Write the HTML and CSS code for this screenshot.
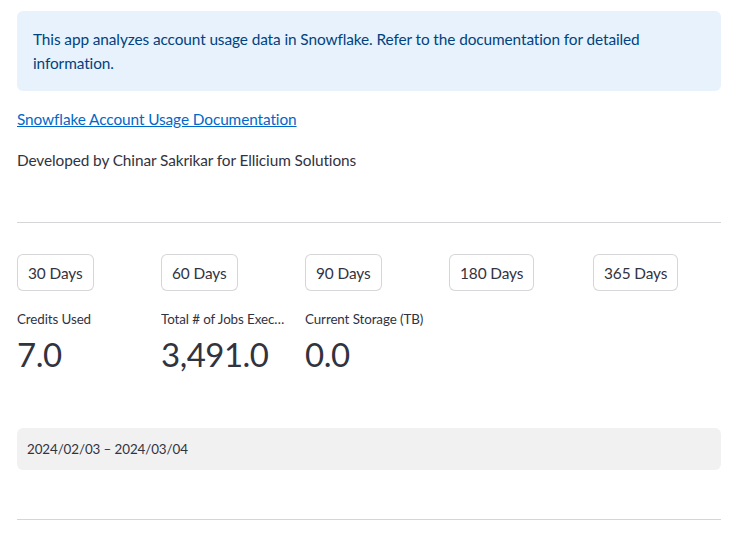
FILE: index.html
```html
<!DOCTYPE html>
<html>
<head>
<meta charset="utf-8">
<link rel="stylesheet" href="styles.css">
</head>
<body>
<main class="main">
  <div class="info">This app analyzes account usage data in Snowflake. Refer to the documentation for detailed information.</div>
  <p class="text link-row"><a class="link" href="#">Snowflake Account Usage Documentation</a></p>
  <p class="text dev">Developed by Chinar Sakrikar for Ellicium Solutions</p>
  <hr class="rule rule-top">
  <div class="cols buttons">
    <div class="col"><button class="btn">30 Days</button></div>
    <div class="col"><button class="btn">60 Days</button></div>
    <div class="col"><button class="btn">90 Days</button></div>
    <div class="col"><button class="btn">180 Days</button></div>
    <div class="col"><button class="btn">365 Days</button></div>
  </div>
  <div class="cols metrics">
    <div class="metric"><div class="m-label">Credits Used</div><div class="m-value">7.0</div></div>
    <div class="metric"><div class="m-label">Total # of Jobs Executed</div><div class="m-value">3,491.0</div></div>
    <div class="metric"><div class="m-label">Current Storage (TB)</div><div class="m-value">0.0</div></div>
    <div class="metric"></div>
    <div class="metric"></div>
  </div>
  <div class="date">2024/02/03 – 2024/03/04</div>
  <hr class="rule rule-bottom">
</main>
</body>
</html>
```
FILE: styles.css
```css
html, body {
  margin: 0;
  padding: 0;
  background: #ffffff;
}
body {
  font-family: Lato, "Source Sans Pro", "Liberation Sans", sans-serif;
  color: rgb(49, 51, 63);
  font-size: 16px;
}
.main {
  padding: 11px 23px 0 17px;
  display: flex;
  flex-direction: column;
}
.info {
  background: #e8f2fc;
  color: #004280;
  border-radius: 6px;
  padding: 16px 16px;
  line-height: 24px;
  font-size: 15.4px;
  letter-spacing: -0.1px;
}
.text {
  margin: 0;
  line-height: 24px;
  font-size: 15.4px;
  letter-spacing: -0.1px;
}
.link-row { margin-top: 16px; }
.link { color: rgb(0, 104, 201); text-decoration: underline; }
.dev { margin-top: 17px; }
.rule {
  border: none;
  height: 1px;
  background: #d5d5d8;
  margin: 0;
}
.rule-top { margin-top: 50px; }
.cols {
  display: grid;
  grid-template-columns: repeat(5, 1fr);
  column-gap: 16px;
}
.buttons { margin-top: 31px; }
.btn {
  font-family: inherit;
  font-size: 15.4px;
  letter-spacing: -0.1px;
  color: rgb(49, 51, 63);
  background: #ffffff;
  border: 1px solid rgba(49, 51, 63, 0.2);
  border-radius: 6px;
  height: 37px;
  padding: 0 10px;
  cursor: pointer;
}
.metrics { margin-top: 16px; }
.metric { min-width: 0; }
.m-label {
  font-size: 13.4px;
  line-height: 24px;
  white-space: nowrap;
  overflow: hidden;
  text-overflow: ellipsis;
  letter-spacing: -0.1px;
}
.m-value {
  font-size: 33px;
  line-height: 46px;
  letter-spacing: -0.5px;
}
.date {
  margin-top: 51px;
  background: #f1f1f1;
  border-radius: 6px;
  height: 42px;
  display: flex;
  align-items: center;
  padding: 0 10px;
  font-size: 13.4px;
  letter-spacing: -0.1px;
}
.rule-bottom { margin-top: 49px; }
```
